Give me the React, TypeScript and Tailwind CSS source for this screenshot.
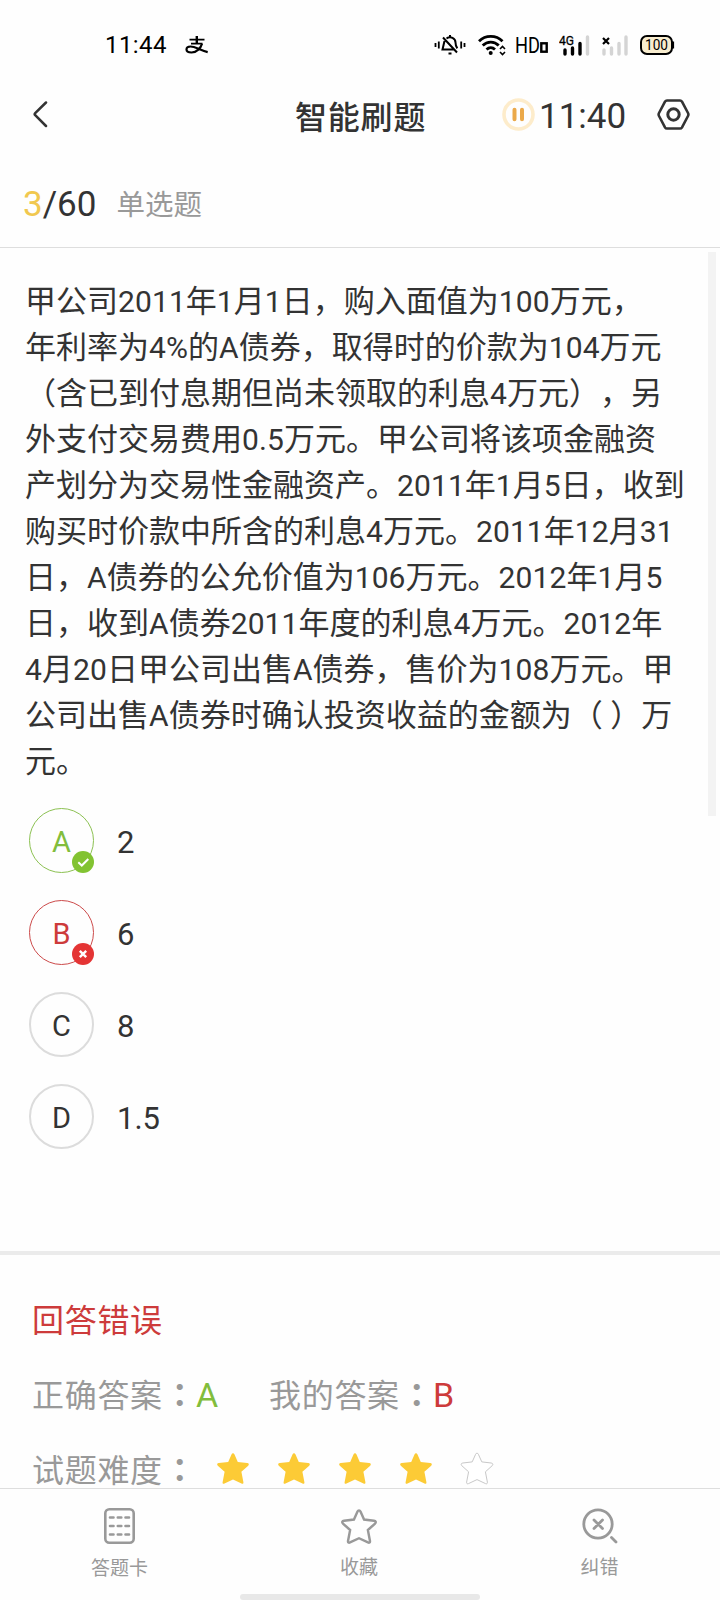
import React from "react";

const passage = [
  "甲公司2011年1月1日，购入面值为100万元，",
  "年利率为4%的A债券，取得时的价款为104万元",
  "（含已到付息期但尚未领取的利息4万元），另",
  "外支付交易费用0.5万元。甲公司将该项金融资",
  "产划分为交易性金融资产。2011年1月5日，收到",
  "购买时价款中所含的利息4万元。2011年12月31",
  "日，A债券的公允价值为106万元。2012年1月5",
  "日，收到A债券2011年度的利息4万元。2012年",
  "4月20日甲公司出售A债券，售价为108万元。甲",
  "公司出售A债券时确认投资收益的金额为（ ）万",
  "元。",
];

function Line({ text }: { text: string }) {
  const runs = text.match(/[\x21-\x7e]+|[^\x21-\x7e]+/g) ?? [];
  return (
    <div className="h-[46px] whitespace-nowrap">
      {runs.map((run, i) =>
        /^[\x21-\x7e]/.test(run) ? (
          <span key={i} className="tracking-[0.1px]">{run}</span>
        ) : (
          <span key={i} className="text-[31px] leading-none">{run}</span>
        ),
      )}
    </div>
  );
}

const STAR =
  "M17 2.2c.7 0 1.1.4 1.4 1.1l3.4 7.6 9.4 1.1c1.7.2 2.2 1.6 1 2.7l-6.8 6.1 2 10.4c.2 1.4-.7 2-1.9 1.4L17 28.6l-8.5 4c-1.2.6-2.1 0-1.9-1.4l2-10.4-6.8-6.1c-1.2-1.1-.7-2.5 1-2.7l9.4-1.1 3.4-7.6c.3-.7.7-1.1 1.4-1.1z";

function StatusBar() {
  return (
    <div className="flex h-[90px] shrink-0 items-center pl-[105px] pr-[45px] text-black">
      <span className="w-[62px] text-[24px] leading-[30px] tracking-[0.4px]">11:44</span>
      <svg className="ml-[18px] h-[20px] w-[24px]" viewBox="0 0 24 20" fill="none" stroke="#000">
        <path d="M4.5 4.7h15M6 8.7h11.5" strokeWidth="1.8" />
        <path d="M11.8 1v7.7" strokeWidth="2.4" />
        <path d="M17 8.7c-1.2 4.2-5 8.8-10.5 8.8-3.2 0-5-1.2-5-3 0-2 1.8-3 4.2-3 4.5 0 9.5 4 17 5.6" strokeWidth="2.2" />
      </svg>
      <div className="ml-auto flex items-center">
        <svg className="h-[22px] w-[32px]" viewBox="0 0 32 22" fill="none" stroke="#000" strokeWidth="2">
          <path d="M1.5 9v4M4.8 7.5v7M27.2 7.5v7M30.5 9v4" strokeWidth="1.8" />
          <path d="M10.5 7L8.5 15.5h12M12.5 4.5c4-2.8 9-.2 9 4.1 0 2 .5 4 1.8 5.8M16 1v2M14.5 19.5h3M9 3.5l14 15" />
        </svg>
        <svg className="ml-[12px] h-[22px] w-[28px]" viewBox="0 0 28 22" fill="none" stroke="#000" strokeWidth="2.8">
          <path d="M1 7.2C7.5.7 18 .7 24.5 7.2M4.7 11.5c4.6-4.6 11.6-4.6 16 0M8.5 15.5c2.6-2.4 6-2.4 8.5 0" />
          <circle cx="12.7" cy="19" r="2" fill="#000" stroke="none" />
          <path d="M22 15l2.5-2.5L27 15M22 18l2.5 2.5L27 18" strokeWidth="1.6" />
        </svg>
        <svg className="ml-[9px] h-[22px] w-[33px]" viewBox="0 0 33 22">
          <text x="0" y="18.5" fontSize="22" fontFamily="Roboto, sans-serif" textLength="25" lengthAdjust="spacingAndGlyphs">HD</text>
          <rect x="26.3" y="9.3" width="5.4" height="8.4" fill="none" stroke="#000" strokeWidth="2.4" />
        </svg>
        <svg className="ml-[11px] h-[22px] w-[32px]" viewBox="0 0 32 22">
          <text x="0" y="11" fontSize="13" fontFamily="Roboto, sans-serif" textLength="15" lengthAdjust="spacingAndGlyphs" stroke="#000" strokeWidth=".3">4G</text>
          <path d="M6 16v4M13.5 14v6M21 9.5v10.5" stroke="#000" strokeWidth="3.4" strokeLinecap="round" />
          <path d="M28.5 3v17" stroke="#d4d4d4" strokeWidth="3.4" strokeLinecap="round" />
        </svg>
        <svg className="ml-[10px] h-[22px] w-[28px]" viewBox="0 0 28 22" strokeWidth="3.4" strokeLinecap="round">
          <path d="M3 16v4M10.5 14v6M18 9.5v10.5M25 3v17" stroke="#d4d4d4" />
          <path d="M2 4l6 6M8 4l-6 6" stroke="#000" strokeWidth="2.2" strokeLinecap="butt" />
        </svg>
        <svg className="ml-[11px] h-[20px] w-[35px]" viewBox="0 0 35 20">
          <rect x="1" y="1" width="31" height="18" rx="6" fill="#f8edcf" stroke="#000" strokeWidth="2" />
          <path d="M33 6.5v7" stroke="#000" strokeWidth="2.2" />
          <text x="5" y="15" fontSize="14.5" fontFamily="Roboto, sans-serif" textLength="23" lengthAdjust="spacingAndGlyphs">100</text>
        </svg>
      </div>
    </div>
  );
}

function Header() {
  return (
    <header className="grid h-[70px] shrink-0 grid-cols-[295px_1fr_auto] items-start">
      <svg className="ml-[33px] mt-[11px] h-[27px] w-[15px]" viewBox="0 0 15 27" fill="none" stroke="#333" strokeWidth="2.5" strokeLinecap="round" strokeLinejoin="round">
        <path d="M13 1.5L2.2 12.2q-1 1 0 2L13 25" />
      </svg>
      <h1 className="mt-[5px] text-[32px] font-medium leading-[46px] tracking-[0.8px]">智能刷题</h1>
      <div className="flex pr-[30px]">
        <svg className="mt-[8px] h-[33px] w-[33px]" viewBox="0 0 33 33" fill="none">
          <circle cx="16.5" cy="16.5" r="14.5" stroke="#fdeccb" strokeWidth="3.6" />
          <path d="M12.5 11.8v9.4M20 11.8v9.4" stroke="#eba94a" strokeWidth="4" strokeLinecap="round" />
        </svg>
        <span className="ml-[4px] mt-[6px] w-[88px] text-[35px] leading-[42px]">11:40</span>
        <svg className="ml-[30px] mt-[9px] h-[31px] w-[33px]" viewBox="0 0 33 31" fill="none" stroke="#333" strokeWidth="2.6">
          <path strokeLinejoin="round" d="M10 1.5h13q1.3 0 2 1.2l6 11.3q.8 1.5 0 3L25 28.3q-.7 1.2-2 1.2H10q-1.3 0-2-1.2L2 17q-.8-1.5 0-3L8 2.7q.7-1.2 2-1.2z" />
          <circle cx="16.5" cy="15.5" r="5.7" strokeWidth="3" />
        </svg>
      </div>
    </header>
  );
}

function Badge({ ok }: { ok: boolean }) {
  return (
    <svg className="absolute -bottom-px -right-px h-[22px] w-[22px]" viewBox="0 0 22 22" fill="none" stroke="#fff" strokeWidth="2">
      <circle cx="11" cy="11" r="11" fill={ok ? "#82c332" : "#e43434"} stroke="none" />
      {ok ? <path d="M6.3 11.2l3.5 3.3 6.5-6.5" /> : <path d="M7.8 7.8l6.4 6.4M14.2 7.8l-6.4 6.4" strokeWidth="2.4" />}
    </svg>
  );
}

function Colon() {
  return <span className="ml-px font-['Noto_Sans_CJK_TC',sans-serif] font-bold leading-none" lang="zh-TW">：</span>;
}

const options = [
  { key: "A", value: "2", ring: "border border-[#8cc152] text-[#82bd3c]", ok: true },
  { key: "B", value: "6", ring: "border border-[#cc4a4a] text-[#cd3b3b]", ok: false },
  { key: "C", value: "8", ring: "border-2 border-[#dcdcdc]", ok: null },
  { key: "D", value: "1.5", ring: "border-2 border-[#dcdcdc]", ok: null },
];

export default function App() {
  return (
    <div lang="zh-CN" className="flex h-[1600px] w-[720px] flex-col overflow-hidden bg-[#fefefe] font-['Roboto','Noto_Sans_CJK_SC',sans-serif] text-[#333] [text-spacing-trim:space-all]">
      <StatusBar />
      <Header />
      <div className="flex h-[88px] shrink-0 items-start border-b border-[#dedede] pl-[23px]">
        <div className="mt-[23px] text-[35px] leading-[44px]">
          <span className="text-[#f1c84f]">3</span>/60
        </div>
        <div className="ml-[20px] mt-[25px] text-[28.5px] leading-[42px] text-[#999]">单选题</div>
      </div>

      <main className="flex min-h-0 flex-1 flex-col overflow-hidden">
        <section className="flex h-[536px] shrink-0 items-start justify-between pl-[25px] pr-[4px] pt-[4px]">
          <div className="pt-[27px] text-[30px] leading-[46px]">
            {passage.map((line) => (
              <Line key={line} text={line} />
            ))}
          </div>
          <div className="h-[564px] w-[8px] shrink-0 bg-[#f3f3f3]" />
        </section>
        <ul className="mt-[24px] flex shrink-0 flex-col gap-[27px] pl-[29px]">
          {options.map((o) => (
            <li key={o.key} className="flex h-[65px] items-center">
              <div className={`relative flex h-[65px] w-[65px] items-center justify-center rounded-full text-[29px] ${o.ring}`}>
                <span className="mt-[5px]">{o.key}</span>
                {o.ok !== null && <Badge ok={o.ok} />}
              </div>
              <span className="ml-[23px] mt-[6px] text-[31px]">{o.value}</span>
            </li>
          ))}
        </ul>
        <section className="mt-[102px] shrink-0 border-t-4 border-[#ebebeb] pl-[32px] pt-[42px] text-[32px] leading-[48px] text-[#999]">
          <h2 className="h-[75px] tracking-[0.7px] text-[#cd3b3b]">回答错误</h2>
          <div className="flex h-[75px] tracking-[0.7px]">
            <span className="w-[164px] whitespace-nowrap">正确答案<Colon /></span>
            <span className="-mt-px w-[73px] text-[34px] text-[#82bd3c]">A</span>
            <span className="w-[164px] whitespace-nowrap">我的答案<Colon /></span>
            <span className="-mt-px text-[34px] text-[#cd3b3b]">B</span>
          </div>
          <div className="flex h-[75px] tracking-[0.7px]">
            <span className="w-[184px] whitespace-nowrap">试题难度<Colon /></span>
            <div className="flex gap-[27px]">
              {[0, 1, 2, 3, 4].map((i) => (
                <svg key={i} className="mt-[4px] h-[34px] w-[34px]" viewBox="0 0 34 34">
                  <path d={STAR} fill={i < 4 ? "#fccb36" : "#fff"} stroke={i < 4 ? "none" : "#c8c8c8"} />
                </svg>
              ))}
            </div>
          </div>
        </section>
      </main>

      <nav className="flex h-[112px] shrink-0 flex-col border-t border-[#dedede] bg-[#fefefe] text-[19px] leading-[28px] text-[#999]">
        <div className="grid h-[105px] grid-cols-[239px_240px_241px]">
          <div className="flex flex-col items-center pt-[19px]">
            <svg className="h-[36px] w-[31px]" viewBox="0 0 31 36" fill="none" stroke="#999" strokeWidth="2.6">
              <rect x="1.3" y="1.3" width="28.4" height="33.4" rx="4" />
              <path d="M6 9.5h3.5M13.8 9.5h3.5M21.5 9.5H25M6 18h3.5M13.8 18h3.5M21.5 18H25M6 26.5h3.5M13.8 26.5h3.5M21.5 26.5H25" strokeLinecap="round" />
            </svg>
            <span className="mt-[11px]">答题卡</span>
          </div>
          <div className="flex flex-col items-center pt-[18px]">
            <svg className="h-[38px] w-[38px]" viewBox="-1 -1 36 36">
              <path d={STAR} fill="none" stroke="#999" strokeWidth="2.3" />
            </svg>
            <span className="mt-[9px]">收藏</span>
          </div>
          <div className="flex flex-col items-center pt-[19px]">
            <svg className="h-[36px] w-[36px]" viewBox="0 0 36 36" fill="none" stroke="#999" strokeWidth="2.8">
              <circle cx="16" cy="16" r="14.2" />
              <path d="M12 12l8.5 8.5M20.5 12L12 20.5M29.5 29.5l4.5 4.5" strokeLinecap="round" />
            </svg>
            <span className="mt-[10px]">纠错</span>
          </div>
        </div>
        <div className="mx-auto h-[6px] w-[240px] rounded-full bg-[#e8e8e8]" />
      </nav>
    </div>
  );
}
